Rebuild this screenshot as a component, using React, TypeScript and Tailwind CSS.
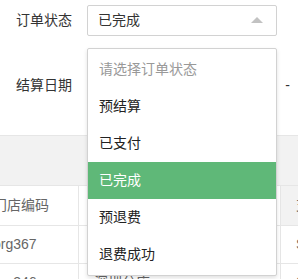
import React from "react";

const font = { fontFamily: '"Liberation Sans", "Noto Sans CJK SC", sans-serif' };

export default function App() {
  const items = ["预结算", "已支付", "已完成", "预退费", "退费成功"];
  return (
    <div className="w-[298px] h-[279px] overflow-hidden bg-white text-[14px] text-[#333]" style={font}>
      <div className="h-[135px] pt-[5px]">
        <div className="flex items-center h-[31px]">
          <div className="w-[87px] pl-[16px] text-[#333]">订单状态</div>
          <div className="relative w-[190px] h-[31px] border border-[#d2d2d2] rounded-[2px] z-10">
            <div className="flex items-center justify-between h-full pl-[10px] pr-[13px]">
              <span>已完成</span>
              <span className="w-0 h-0 border-x-[6px] border-x-transparent border-b-[6px] border-b-[#c2c2c2] mb-[1px]"></span>
            </div>
            <div className="absolute left-[-1px] top-[42px] w-[190px] h-[228px] bg-white border border-[#d2d2d2] rounded-[2px] shadow-[0_2px_4px_rgba(0,0,0,0.12)] py-[2px]">
              <div className="h-[37px] flex items-center pl-[11px] text-[#999]">请选择订单状态</div>
              {items.map((it) => (
                <div
                  key={it}
                  className={
                    it === "已完成"
                      ? "h-[37px] flex items-center pl-[11px] bg-[#5fb878] text-white"
                      : "h-[37px] flex items-center pl-[11px] text-[#222]"
                  }
                >
                  {it}
                </div>
              ))}
            </div>
          </div>
        </div>
        <div className="flex items-center h-[31px] mt-[34px]">
          <div className="w-[87px] pl-[16px] text-[#333]">结算日期</div>
          <div className="w-[190px] h-[31px] border border-[#e6e6e6]"></div>
          <div className="w-[21px] text-center">-</div>
        </div>
      </div>
      <div className="h-[50px] bg-[#f2f2f2] border-t border-[#e6e6e6]"></div>
      <div className="overflow-hidden">
        <div className="ml-[-22px] w-[400px] border-t border-[#e6e6e6]">
          <div className="flex h-[40px] border-b border-[#e6e6e6]">
            <div className="w-[100px] flex items-center pl-[15px] text-[#666] bg-white">门店编码</div>
            <div className="w-[202px] border-l border-[#e6e6e6] bg-white"></div>
            <div className="flex-1 border-l border-[#e6e6e6] bg-[#f2f2f2] flex items-center pl-[15px] text-[#666]">支付方式</div>
          </div>
          <div className="flex h-[38px] border-b border-[#e6e6e6]">
            <div className="w-[100px] flex items-center pl-[15px] text-[#666]">org367</div>
            <div className="w-[202px] border-l border-[#e6e6e6] flex items-center pl-[15px] text-[#666]">深圳分店</div>
            <div className="flex-1 border-l border-[#e6e6e6] flex items-center pl-[15px] text-[#666]">Success</div>
          </div>
          <div className="flex h-[38px] border-b border-[#e6e6e6]">
            <div className="w-[100px] flex items-center pl-[15px] text-[#666]">org346</div>
            <div className="w-[202px] border-l border-[#e6e6e6] flex items-center pl-[15px] text-[#666]">深圳分店</div>
            <div className="flex-1 border-l border-[#e6e6e6] flex items-center pl-[15px] text-[#666]">Success</div>
          </div>
        </div>
      </div>
    </div>
  );
}
